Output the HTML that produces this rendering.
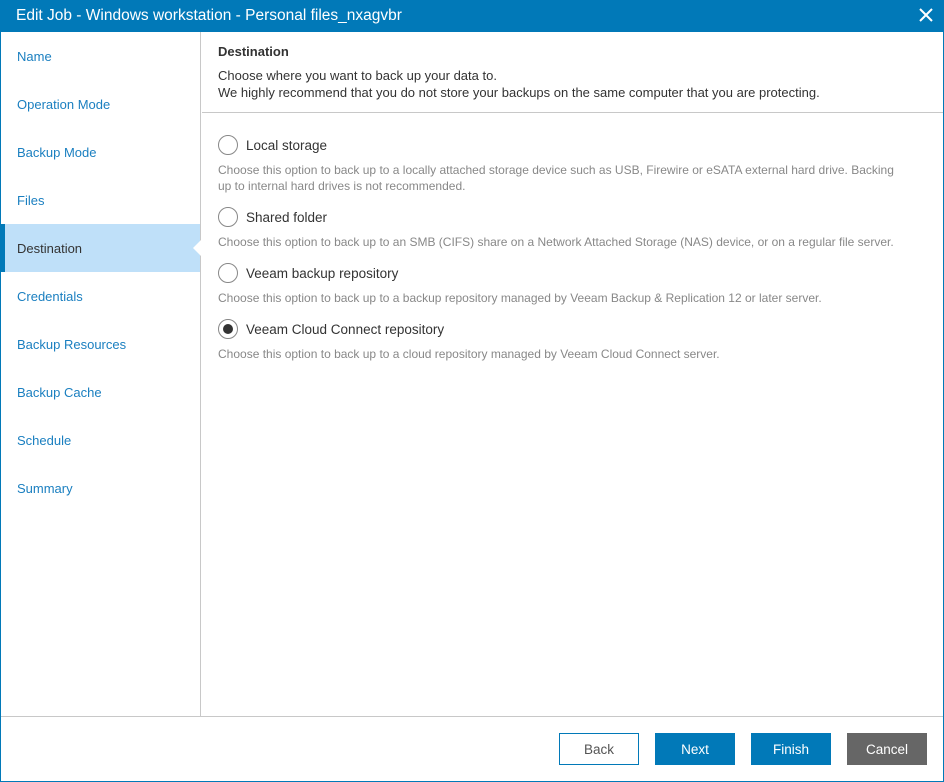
<!DOCTYPE html>
<html><head><style>
*{margin:0;padding:0;box-sizing:border-box}
body{width:944px;height:782px;background:#fff;font-family:"Liberation Sans",sans-serif;font-size:13px;color:#333;position:relative;overflow:hidden}
.win{position:absolute;left:0;top:0;width:944px;height:782px;border:1px solid #0179b8;border-top:none}
.title{position:absolute;left:0;top:0;width:944px;height:32px;background:#0179b8;color:#fff;font-size:15.5px;line-height:32px;padding-left:16px}
.x{position:absolute;right:10px;top:7px;width:16px;height:16px}
.nav{position:absolute;left:1px;top:32px;width:200px;height:684px;border-right:1px solid #c8c8c8}
.nav div{height:48px;line-height:50px;padding-left:16px;color:#1a7fc0}
.nav .act{background:#bfe0f9;color:#333;border-left:4px solid #0179b8;padding-left:12px;position:relative}
.nav .act:after{content:"";position:absolute;right:-1px;top:16px;border:8px solid transparent;border-right-color:#fff}
.hdr{position:absolute;left:202px;top:32px;width:741px;height:81px;border-bottom:1px solid #c8c8c8;padding:12px 0 0 16px}
.hdr b{display:block;font-size:13px;margin-bottom:8px}
.hdr p{line-height:17px}
.opt{position:absolute;left:218px}
.rad{position:absolute;left:0;width:20px;height:20px;border:1px solid #888;border-radius:50%;background:#fff}
.rad.on:after{content:"";position:absolute;left:4px;top:4px;width:10px;height:10px;border-radius:50%;background:#333}
.lab{position:absolute;left:28px;font-size:13.5px;white-space:nowrap}
.desc{position:absolute;left:218px;color:#888;font-size:12px;line-height:16px;width:690px}
.foot{position:absolute;left:1px;top:716px;width:942px;border-top:1px solid #c8c8c8}
.btn{position:absolute;top:733px;width:80px;height:32px;line-height:33px;text-align:center;font-size:13.5px;color:#fff}
</style></head><body>
<div class="win"></div>
<div class="title">Edit Job - Windows workstation - Personal files_nxagvbr
<svg class="x" viewBox="0 0 16 16"><path d="M2 2L14 14M14 2L2 14" stroke="#fff" stroke-width="2"/></svg></div>
<div class="nav">
<div>Name</div><div>Operation Mode</div><div>Backup Mode</div><div>Files</div>
<div class="act">Destination</div><div>Credentials</div><div>Backup Resources</div><div>Backup Cache</div><div>Schedule</div><div>Summary</div>
</div>
<div class="hdr"><b>Destination</b><p>Choose where you want to back up your data to.<br>We highly recommend that you do not store your backups on the same computer that you are protecting.</p></div>
<div class="opt" style="top:135px"><div class="rad"></div><div class="lab" style="top:3px">Local storage</div></div>
<div class="desc" style="top:162px">Choose this option to back up to a locally attached storage device such as USB, Firewire or eSATA external hard drive. Backing<br>up to internal hard drives is not recommended.</div>
<div class="opt" style="top:207px"><div class="rad"></div><div class="lab" style="top:3px">Shared folder</div></div>
<div class="desc" style="top:234px">Choose this option to back up to an SMB (CIFS) share on a Network Attached Storage (NAS) device, or on a regular file server.</div>
<div class="opt" style="top:263px"><div class="rad"></div><div class="lab" style="top:3px">Veeam backup repository</div></div>
<div class="desc" style="top:290px">Choose this option to back up to a backup repository managed by Veeam Backup &amp; Replication 12 or later server.</div>
<div class="opt" style="top:319px"><div class="rad on"></div><div class="lab" style="top:3px">Veeam Cloud Connect repository</div></div>
<div class="desc" style="top:346px">Choose this option to back up to a cloud repository managed by Veeam Cloud Connect server.</div>
<div class="foot"></div>
<div class="btn" style="left:559px;border:1px solid #0179b8;color:#555;line-height:31px">Back</div>
<div class="btn" style="left:655px;background:#0179b8">Next</div>
<div class="btn" style="left:751px;background:#0179b8">Finish</div>
<div class="btn" style="left:847px;background:#666">Cancel</div>
</body></html>
